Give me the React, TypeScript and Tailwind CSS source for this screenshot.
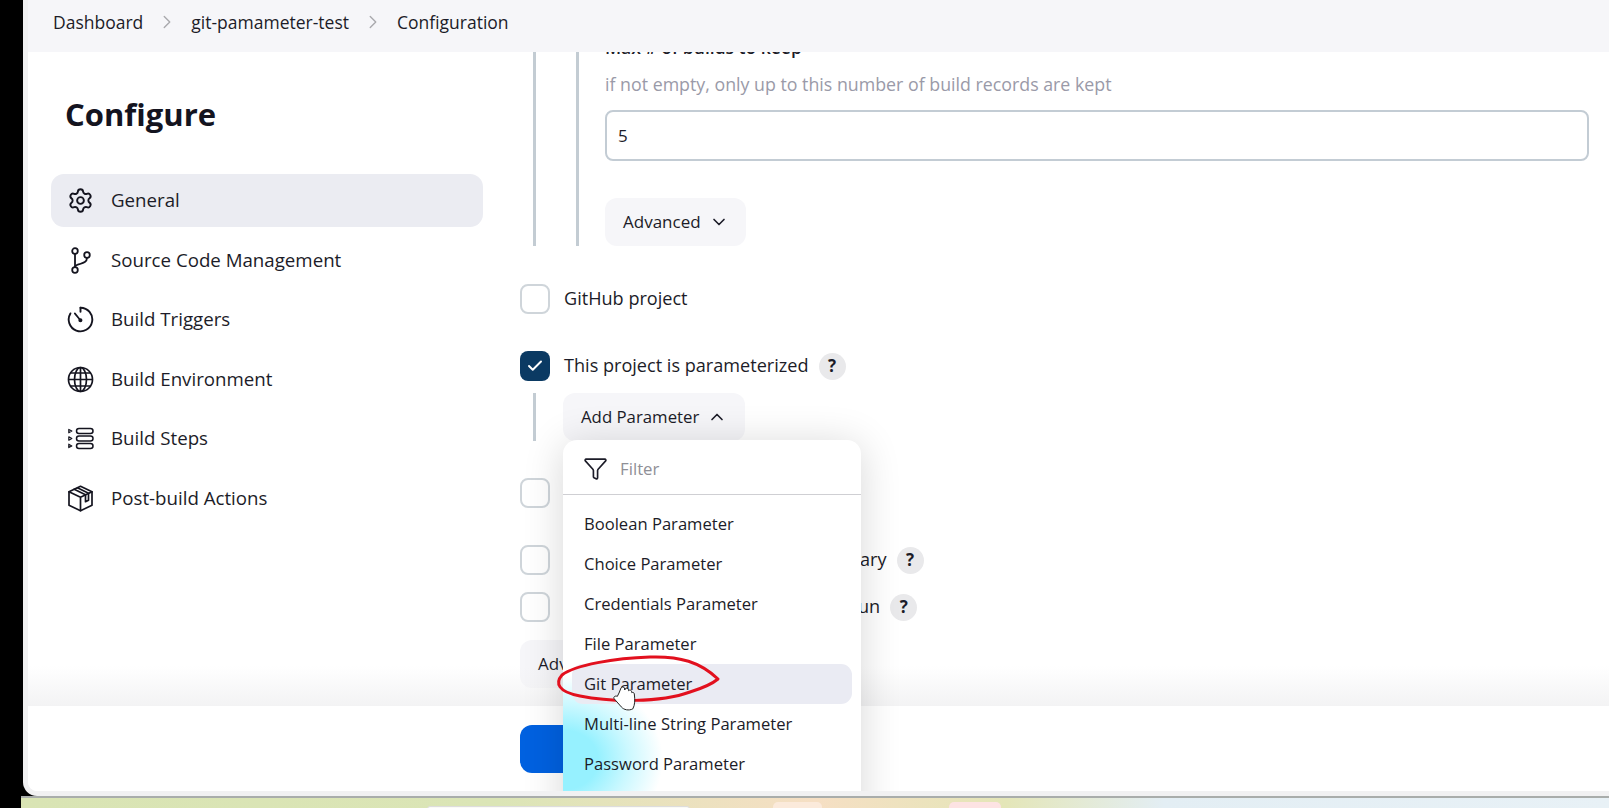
import React from "react";
import { ChevronDown, ChevronUp, ChevronRight, Check, Settings, Funnel } from "lucide-react";

const font = { fontFamily: '"Open Sans", "Noto Sans", sans-serif' };

function BranchIcon() {
  return (
    <svg width="27" height="27" viewBox="0 0 27 27" fill="none" stroke="#14141f" strokeWidth="1.8" strokeLinecap="round">
      <circle cx="8" cy="4" r="2.8" />
      <circle cx="8" cy="23" r="2.8" />
      <circle cx="20" cy="8" r="2.8" />
      <path d="M8 6.8v13.4" />
      <path d="M20 10.8c0 4.2-3.5 5.2-7 6.2-2.5.7-5 1.2-5 3.2" />
    </svg>
  );
}
function TimerIcon() {
  return (
    <svg width="27" height="27" viewBox="0 0 27 27" fill="none" stroke="#14141f" strokeWidth="1.9" strokeLinecap="round" strokeLinejoin="round">
      <path d="M13.5 1.7A11.8 11.8 0 1 1 3.4 7.4" />
      <path d="M13.5 1.7v4" />
      <path d="M7.8 7.4l5.4 6.6" strokeWidth="1.7" />
      <circle cx="13.4" cy="14.2" r="1.1" fill="#14141f" />
    </svg>
  );
}
function GlobeIcon() {
  return (
    <svg width="27" height="27" viewBox="0 0 27 27" fill="none" stroke="#14141f" strokeWidth="1.7">
      <circle cx="13.5" cy="13.5" r="12" />
      <ellipse cx="13.5" cy="13.5" rx="6" ry="12" />
      <path d="M13.5 1.5v24M1.5 13.5h24M3.5 7h20M3.5 20h20" />
    </svg>
  );
}
function StepsIcon() {
  return (
    <svg width="27" height="27" viewBox="0 0 27 27" fill="none" stroke="#14141f" strokeWidth="1.5" strokeLinejoin="round">
      <rect x="9.5" y="3.6" width="16.5" height="5" rx="2.5" />
      <rect x="9.5" y="11" width="16.5" height="5" rx="2.5" />
      <rect x="9.5" y="18.4" width="16.5" height="5" rx="2.5" />
      <path d="M1.8 4.4l3 1.7-3 1.7zM1.8 11.8l3 1.7-3 1.7zM1.8 19.2l3 1.7-3 1.7z" strokeWidth="1.2" />
    </svg>
  );
}
function BoxIcon() {
  return (
    <svg width="27" height="27" viewBox="0 0 27 27" fill="none" stroke="#14141f" strokeWidth="1.7" strokeLinejoin="round" strokeLinecap="round">
      <path d="M13.5 1.3L25 6.8v13.4l-11.5 5.5L2 20.2V6.8z" />
      <path d="M2 6.8l11.5 5.5L25 6.8M13.5 12.3v13.4" />
      <path d="M7.2 4.2l11.3 5.5v7l3-1.5V8.3L10.4 2.8" />
    </svg>
  );
}

function NavItem({ icon, label, active }: { icon: React.ReactNode; label: string; active?: boolean }) {
  return (
    <div className={`flex h-[53px] items-center gap-[17px] rounded-[13px] pl-[16px] ${active ? "bg-[#ebecf2]" : ""}`}>
      <span className="flex h-[27px] w-[27px] items-center justify-center">{icon}</span>
      <span className="text-[18.7px] font-medium text-[#1c1c28]">{label}</span>
    </div>
  );
}

function CheckBox({ checked }: { checked?: boolean }) {
  return checked ? (
    <span className="flex h-[30px] w-[30px] shrink-0 items-center justify-center rounded-[8px] bg-[#0b3a63]">
      <Check size={18} strokeWidth={2.6} className="text-white" />
    </span>
  ) : (
    <span className="h-[30px] w-[30px] shrink-0 rounded-[8px] border-[2.5px] border-[#cfd5da] bg-white" />
  );
}

function Help() {
  return (
    <span className="ml-[10px] flex h-[27px] w-[27px] shrink-0 items-center justify-center rounded-full bg-[#e9e9eb] text-[17px] font-bold text-[#1c1c28]">?</span>
  );
}

const params = ["Boolean Parameter", "Choice Parameter", "Credentials Parameter", "File Parameter", "Git Parameter", "Multi-line String Parameter", "Password Parameter"];

export default function App() {
  return (
    <div style={font} className="flex h-[808px] w-[1609px] flex-col overflow-hidden bg-black">
      <div className="flex h-[796px] shrink-0 pl-[23px]">
        <div className="relative flex h-[796px] flex-1 flex-col overflow-hidden rounded-bl-[14px] border-b-[5px] border-l-[5px] border-[#f1f1f2] bg-white">
          <header className="relative z-10 flex h-[52px] shrink-0 items-center gap-[13px] bg-[#f6f6f9] pb-[8px] pl-[25px] text-[17.5px] font-medium text-[#1c1c28]">
            <span>Dashboard</span>
            <ChevronRight size={22} strokeWidth={1.5} className="text-[#a9a9ad]" />
            <span>git-pamameter-test</span>
            <ChevronRight size={22} strokeWidth={1.5} className="text-[#a9a9ad]" />
            <span>Configuration</span>
          </header>

          <div className="flex min-h-0 flex-1">
            <aside className="w-[492px] shrink-0 pl-[23px] pr-[37px]">
              <h1 className="mb-[38px] mt-[40px] pl-[14px] text-[31px] font-bold leading-[44px] text-[#14141f]">Configure</h1>
              <div className="flex flex-col gap-[6.5px]">
                <NavItem active label="General" icon={<Settings size={29} strokeWidth={1.7} className="text-[#14141f]" />} />
                <NavItem label="Source Code Management" icon={<BranchIcon />} />
                <NavItem label="Build Triggers" icon={<TimerIcon />} />
                <NavItem label="Build Environment" icon={<GlobeIcon />} />
                <NavItem label="Build Steps" icon={<StepsIcon />} />
                <NavItem label="Post-build Actions" icon={<BoxIcon />} />
              </div>
            </aside>

            <main className="min-w-0 flex-1">
              <div className="flex h-[194px]">
                <div className="ml-[13px] w-[3px] bg-[#c3ccd3]" />
                <div className="ml-[40px] w-[3px] bg-[#c3ccd3]" />
                <div className="ml-[26px] flex-1 pr-[20px]">
                  <div className="-mt-[16px] h-[22px] text-[17.5px] font-semibold leading-[22px] text-[#1c1c28]">Max # of builds to keep</div>
                  <div className="mt-[12px] text-[17.8px] leading-[28px] text-[#9a9aa8]">if not empty, only up to this number of build records are kept</div>
                  <div className="mt-[12px] flex h-[51px] items-center rounded-[8px] border-[2.5px] border-[#c3ccd4] pl-[11px] text-[17px] text-[#1c1c28]">5</div>
                  <div className="mt-[37px] flex h-[48px] w-[141px] items-center gap-[8px] rounded-[12px] bg-[#f6f6f9] pl-[18px] text-[17px] font-medium text-[#1c1c28]">
                    Advanced <ChevronDown size={20} strokeWidth={2} />
                  </div>
                </div>
              </div>

              <div className="mt-[38px] flex items-center">
                <CheckBox />
                <span className="ml-[14px] text-[18.1px] font-medium text-[#1c1c28]">GitHub project</span>
              </div>
              <div className="mt-[37px] flex items-center">
                <CheckBox checked />
                <span className="ml-[14px] text-[18.1px] font-medium text-[#1c1c28]">This project is parameterized</span>
                <Help />
              </div>
              <div className="mt-[12px] flex h-[48px]">
                <div className="ml-[13px] w-[3px] bg-[#c3ccd3]" />
                <div className="ml-[27px] flex h-[48px] w-[182px] items-center gap-[8px] rounded-[12px] bg-[#f6f6f9] pl-[18px] text-[16.8px] font-medium text-[#1c1c28]">
                  Add Parameter <ChevronUp size={20} strokeWidth={2} />
                </div>
              </div>
              <div className="mt-[37px] flex items-center">
                <CheckBox />
              </div>
              {/* the rest of these two labels is covered by the open menu in the reference */}
              <div className="mt-[37px] flex items-center">
                <CheckBox />
                <span className="ml-[310px] text-[18.1px] font-medium text-[#1c1c28]">ary</span>
                <Help />
              </div>
              <div className="mt-[17px] flex items-center">
                <CheckBox />
                <span className="ml-[308px] text-[18.1px] font-medium text-[#1c1c28]">un</span>
                <Help />
              </div>
              <div className="mt-[18px] flex h-[48px] w-[141px] items-center rounded-[12px] bg-[#f6f6f9] pl-[18px] text-[17px] font-medium text-[#1c1c28]">Adv</div>
            </main>
          </div>

          {/* sticky save bar, lies over the form */}
          <div className="pointer-events-none absolute bottom-0 left-0 right-0 h-[85px] bg-white">
            <div className="absolute bottom-full left-0 right-0 h-[40px] bg-gradient-to-b from-white/0 to-[#f3f3f4]" />
            <div className="absolute left-[492px] top-[19px] h-[48px] w-[141px] rounded-[12px] bg-[#0061e0]" />
          </div>

          {/* open dropdown menu */}
          <div className="absolute left-[535px] top-[440px] h-[400px] w-[298px] rounded-[14px] bg-white shadow-[0_4px_40px_rgba(0,0,0,0.16)]">
            <div className="relative h-full w-full overflow-hidden rounded-[14px]">
              <div className="absolute -left-[100px] top-[235px] h-[170px] w-[200px] bg-[radial-gradient(closest-side,#96f1ff_35%,rgba(150,241,255,0.5)_65%,rgba(255,255,255,0)_100%)]" />
              <div className="relative flex h-[55px] items-center gap-[12px] border-b border-[#cfcfd3] pl-[20px] pt-[3px]">
                <Funnel size={25} strokeWidth={1.6} className="text-[#1c1c28]" />
                <span className="text-[16.8px] text-[#8f8f96]">Filter</span>
              </div>
              <div className="relative flex flex-col px-[9px] pt-[9px]">
                {params.map((p) => (
                  <div key={p} className={`flex h-[40px] items-center rounded-[11px] pl-[12px] text-[16.6px] font-medium text-[#1c1c28] ${p === "Git Parameter" ? "bg-[#eaebf3]" : ""}`}>{p}</div>
                ))}
              </div>
            </div>
          </div>
        </div>
      </div>
      <div className="ml-[21px] flex h-[12px] items-start border-t-2 border-[#a9adab] bg-[linear-gradient(90deg,#d9e4b4_0%,#dbe5b6_30%,#f6dfc4_50%,#e4e6b8_62%,#e3eef4_72%,#e8f1f6_100%)] pl-[406px]">
        <div className="mt-[8px] h-[4px] w-[263px] rounded-t-[3px] border border-[#ddd] bg-[#fafaf5]" />
        <div className="ml-[83px] mt-[4px] h-[8px] w-[49px] rounded-t-[5px] bg-[#fbeadb]" />
        <div className="ml-[127px] mt-[4px] h-[8px] w-[52px] rounded-t-[5px] bg-[#fde3e3]" />
      </div>

      {/* annotation drawn over the screen */}
      <svg className="pointer-events-none absolute left-0 top-0" width="1609" height="808" viewBox="0 0 1609 808" fill="none">
        <path d="M718 679C700 662 680 656 650 657C615 658 575 665 562 675C555 683 558 692 580 696C610 702 660 703 690 692C703 688 712 684 718 679Z" stroke="#e2101e" strokeWidth="3" strokeLinejoin="round" />
        <path transform="translate(-3 0)" d="M622 693l2-5a2 2 0 0 1 3.5 0l.3 2 .3-1a1.8 1.8 0 0 1 3.3 .5l.2 1.2a1.7 1.7 0 0 1 3 1l.2 1a1.6 1.6 0 0 1 2.5 1.2c.8 6 .7 11-1.5 15-4 2-9 1-11.5-2l-7-8c-1.5-2 1-3.5 3-2.5z" fill="#fff" stroke="#222" strokeWidth="1" strokeLinejoin="round" />
      </svg>
    </div>
  );
}
